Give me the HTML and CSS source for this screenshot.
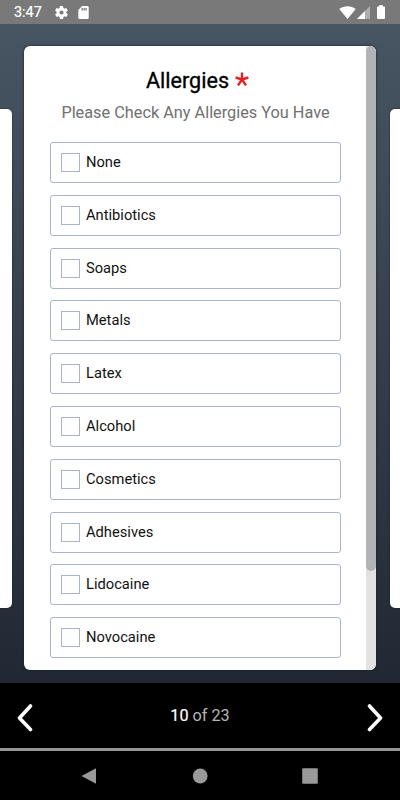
FILE: index.html
```html
<!DOCTYPE html>
<html lang="en">
<head>
<meta charset="utf-8">
<title>Allergies</title>
<link rel="stylesheet" href="styles.css">
</head>
<body>
<header class="status">
  <span class="time">3:47</span>
  <svg class="gear" viewBox="2 2 20 20"><path fill-rule="evenodd" d="M19.4 13c.1-.6.1-1.3 0-2l2.1-1.6c.2-.2.2-.4.1-.6l-2-3.5c-.1-.2-.4-.3-.6-.2l-2.5 1c-.5-.4-1.100-.7-1.700-1l-.4-2.600c0-.3-.2-.5-.5-.5h-4c-.3 0-.5.2-.5.4L9 5.100c-.6.2-1.200.6-1.700 1l-2.500-1c-.2-.1-.5 0-.6.2l-2 3.500c-.1.2-.1.400.1.600L4.500 11v2l-2.100 1.600c-.2.200-.2.400-.1.600l2 3.500c.1.200.4.300.6.200l2.500-1c.5.400 1.100.700 1.700 1l.4 2.600c0 .3.200.5.500.5h4c.3 0 .5-.2.500-.4l.4-2.700c.6-.2 1.200-.6 1.700-1l2.500 1c.2.100.5 0 .6-.2l2-3.500c.1-.2.100-.4-.1-.6zM12 15.200a3.200 3.200 0 1 1 0-6.400 3.200 3.200 0 0 1 0 6.400z"/></svg>
  <svg class="sd" viewBox="4 2 16 20"><path fill-rule="evenodd" d="M18 2h-8L4 8v12c0 1.100.9 2 2 2h12c1.100 0 2-.9 2-2V4c0-1.100-.9-2-2-2zM9 5h2v4H9zm3 0h2v4h-2zm3 0h2v4h-2z"/></svg>
  <span class="grow"></span>
  <svg class="wifi" viewBox="0 0 17 13"><path d="M.3 3C5-.7 12 -.7 16.700 3L8.500 13z"/></svg>
  <svg class="signal" viewBox="0 0 13 13"><path d="M0 13L13 0V13z" opacity=".4"/><path d="M0 13L8 5V13z"/></svg>
  <svg class="battery" viewBox="0 0 8 14"><path d="M2.300 0h3.400v1.500H7q1 0 1 1V13q0 1-1 1H1q-1 0-1-1V2.500q0-1 1-1h1.300z"/></svg>
</header>
<main class="stage">
  <div class="peek peek-left"></div>
  <section class="card">
    <div class="content">
      <h1>Allergies <svg class="required" viewBox="0 0 14 14"><path d="M7 7.500V.5M7 7.500L.6 5.500M7 7.500L13.400 5.500M7 7.500L3 13.400M7 7.500L11 13.400"/></svg></h1>
      <p class="hint">Please Check Any Allergies You Have</p>
      <div class="options">
        <label class="option"><span class="box"></span>None</label>
        <label class="option"><span class="box"></span>Antibiotics</label>
        <label class="option"><span class="box"></span>Soaps</label>
        <label class="option"><span class="box"></span>Metals</label>
        <label class="option"><span class="box"></span>Latex</label>
        <label class="option"><span class="box"></span>Alcohol</label>
        <label class="option"><span class="box"></span>Cosmetics</label>
        <label class="option"><span class="box"></span>Adhesives</label>
        <label class="option"><span class="box"></span>Lidocaine</label>
        <label class="option"><span class="box"></span>Novocaine</label>
      </div>
    </div>
    <div class="track"><div class="thumb"></div></div>
  </section>
  <div class="peek peek-right"></div>
</main>
<footer class="pager">
  <svg class="arrow" viewBox="0 0 16 28"><path d="M13.500 2L2.500 14L13.500 25.500"/></svg>
  <span class="count"><b>10</b> of 23</span>
  <svg class="arrow" viewBox="0 0 16 28"><path d="M2.500 2L13.500 14L2.500 25.500"/></svg>
</footer>
<nav class="system">
  <svg viewBox="0 0 18 18"><path d="M15 1.200v15.600L.5 9z"/></svg>
  <svg viewBox="0 0 18 18"><circle cx="9.200" cy="9" r="7.400"/></svg>
  <svg viewBox="0 0 18 18"><rect x="1.200" y="1.200" width="15.600" height="15.600" rx="1.200"/></svg>
</nav>
</body>
</html>
```
FILE: styles.css
```css
* { box-sizing: border-box; }
body {
  margin: 0;
  width: 400px;
  height: 800px;
  overflow: hidden;
  display: flex;
  flex-direction: column;
  background: #000;
  font-family: Roboto, "Liberation Sans", sans-serif;
}
svg { display: block; flex: none; }
.status {
  height: 24px;
  padding: 1px 15px 0 14px;
  display: flex;
  align-items: center;
  background: #797979;
  color: #fff;
  fill: #fff;
}
.time {
  width: 41px;
  padding-top: 1px;
  font-size: 14.4px;
  line-height: 22px;
  -webkit-text-stroke: 0.2px #fff;
}
.gear { width: 13px; height: 13px; }
.sd { width: 11px; height: 13px; margin-left: 10px; }
.grow { flex: 1; }
.wifi { width: 17px; height: 13px; margin-top: -1px; }
.signal { width: 13px; height: 13px; margin: -1px 7px 0 1px; }
.battery { width: 8px; height: 14px; margin-top: -1px; }
.stage {
  height: 659px;
  padding: 22px 0 13px;
  display: flex;
  justify-content: space-between;
  background: linear-gradient(#485563, #212833);
}
.peek {
  width: 12px;
  height: 499.5px;
  margin-top: 62.5px;
  background: #fff;
  box-shadow: 0 0 2px #10202e;
}
.peek-left { border-radius: 0 5px 5px 0; }
.peek-right { width: 10.5px; border-radius: 5px 0 0 5px; }
.card {
  width: 352px;
  height: 624px;
  margin-right: 1.5px;
  display: flex;
  overflow: hidden;
  border-radius: 6px;
  background: #fff;
  box-shadow: 0 0 3px #10202e;
}
.content { width: 342px; padding: 20px 25px 0 26px; }
h1 {
  margin: 0;
  height: 30px;
  padding-left: 4px;
  display: flex;
  justify-content: center;
  align-items: center;
  font-size: 21.6px;
  font-weight: 400;
  line-height: 30px;
  color: #000;
  -webkit-text-stroke: 0.3px #000;
}
.required {
  width: 14px;
  height: 14px;
  margin: -4px 0 0 6px;
  fill: none;
  stroke: #e52225;
  stroke-width: 2.4;
}
.hint {
  margin: 5px 0 17px;
  font-size: 16.3px;
  line-height: 24px;
  text-align: center;
  white-space: nowrap;
  color: #707070;
}
.options { display: flex; flex-direction: column; gap: 11.8px; }
.option {
  height: 41px;
  padding: 0 0 1px 10px;
  display: flex;
  align-items: center;
  border: 1px solid #a9b4cf;
  border-radius: 3px;
  font-size: 14.7px;
  line-height: 20px;
  color: #111;
}
.box {
  width: 19px;
  height: 19px;
  margin: 1px 6px 0 0;
  border: 1px solid #a9b4cf;
}
.track { width: 10px; background: #e2e2e2; }
.thumb { height: 525px; border-radius: 5px; background: #b1b3b4; }
.pager {
  height: 68px;
  padding: 0 17px;
  display: flex;
  align-items: center;
  justify-content: space-between;
  border-bottom: 3px solid #969696;
  color: #b5b5b5;
}
.arrow {
  width: 16px;
  height: 28px;
  margin-top: 5px;
  fill: none;
  stroke: #fff;
  stroke-width: 3.6;
  stroke-linecap: round;
  stroke-linejoin: round;
}
.count { font-size: 16.2px; line-height: 24px; }
.count b { font-weight: 400; color: #fff; -webkit-text-stroke: 0.2px #fff; }
.system {
  height: 49px;
  padding: 0 81px;
  display: flex;
  align-items: center;
  justify-content: space-between;
  fill: #999;
}
.system svg { width: 18px; height: 18px; }
```
